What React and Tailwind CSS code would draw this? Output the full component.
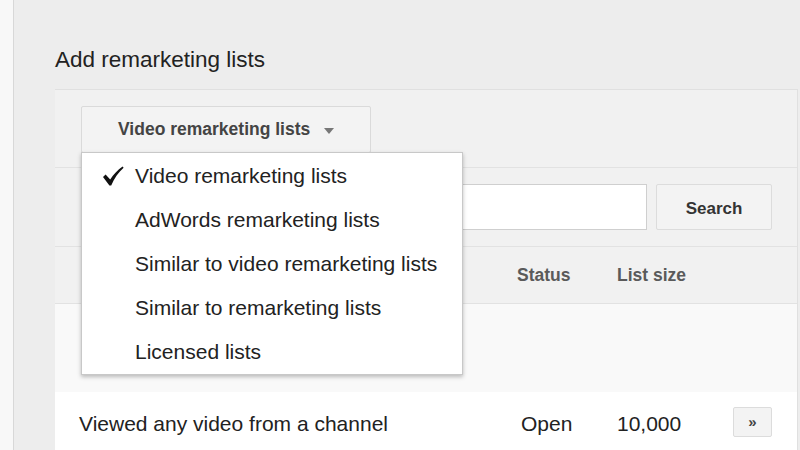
export default function App() {
  const items = [
    "Video remarketing lists",
    "AdWords remarketing lists",
    "Similar to video remarketing lists",
    "Similar to remarketing lists",
    "Licensed lists",
  ];
  return (
    <div className="w-[800px] h-[450px] overflow-hidden flex bg-[#ededed] font-['Liberation_Sans',Arial,sans-serif]">
      <div className="w-[14px] shrink-0 bg-[#f8f8f8] border-r border-[#d8d8d8]" />
      <div className="flex-1 flex flex-col min-w-0">
        <div className="h-[89px] shrink-0 pl-[41px] pt-[47px] text-[22.5px] leading-[26px] text-[#222]">
          Add remarketing lists
        </div>
        <div className="relative ml-[41px] w-[743px] flex-1 flex flex-col border-t border-r border-[#e0e0e0] bg-[#f1f1f1]">
          {/* toolbar */}
          <div className="h-[78px] shrink-0 border-b border-[#e2e2e2] pl-[26px] pt-[16px]">
            <div className="w-[290px] h-[47px] flex items-center pl-[36px] bg-[#f3f3f3] border border-[#dadada] rounded-[2px]">
              <span className="text-[17.5px] font-bold text-[#444]">Video remarketing lists</span>
              <span className="ml-[14px] mt-[2px] w-0 h-0 border-l-[5.5px] border-r-[5.5px] border-t-[6px] border-l-transparent border-r-transparent border-t-[#777]" />
            </div>
          </div>
          {/* search */}
          <div className="h-[79px] shrink-0 border-b border-[#e2e2e2] pl-[26px] pt-[16px] flex gap-[9px]">
            <div className="w-[566px] h-[46px] bg-white border border-[#cfcfcf]" />
            <div className="w-[116px] h-[46px] flex items-center justify-center pt-[3px] bg-[#f3f3f3] border border-[#dcdcdc] rounded-[2px] text-[17px] font-bold text-[#333]">
              Search
            </div>
          </div>
          {/* header */}
          <div className="h-[57px] shrink-0 border-b border-[#e2e2e2] flex items-center text-[17.5px] font-bold text-[#5a5a5a]">
            <div className="w-[462px]" />
            <div className="w-[100px]">Status</div>
            <div className="w-[116px]">List size</div>
          </div>
          {/* body */}
          <div className="h-[88px] shrink-0 bg-[#f9f9f9]" />
          {/* row */}
          <div className="flex-1 bg-white flex items-start pt-[15px] text-[21px] text-[#222]">
            <div className="w-[462px] pl-[24px] pt-[3px] h-[30px] flex items-center">Viewed any video from a channel</div>
            <div className="w-[100px] pl-[4px] pt-[3px] h-[30px] flex items-center">Open</div>
            <div className="w-[116px] pt-[3px] h-[30px] flex items-center">10,000</div>
            <div className="w-[39px] h-[30px] flex items-center justify-center bg-[#f3f3f3] border border-[#dcdcdc] rounded-[2px] text-[15px] font-bold text-[#444]">
              »
            </div>
          </div>
          {/* menu */}
          <div className="absolute left-[26px] top-[62px] w-[382px] pt-[1px] bg-white border border-[#c8c8c8] shadow-[0_2px_4px_rgba(0,0,0,0.25)] flex flex-col">
            {items.map((t, i) => (
              <div key={t} className="h-[44px] flex items-center text-[21px] text-[#222]">
                <div className="w-[53px] shrink-0 flex justify-end pr-[11px]">
                  {i === 0 && (
                    <svg width="22" height="20" viewBox="0 0 22 20">
                      <path d="M1 11 L3.6 8.6 L8.2 13.4 C11.5 8.5 15.5 4.3 20.6 0.6 L21.6 1.8 C16.4 6.6 12.4 12 9.2 19.4 L7.4 19.4 Z" fill="#111" />
                    </svg>
                  )}
                </div>
                <span>{t}</span>
              </div>
            ))}
          </div>
        </div>
      </div>
    </div>
  );
}
